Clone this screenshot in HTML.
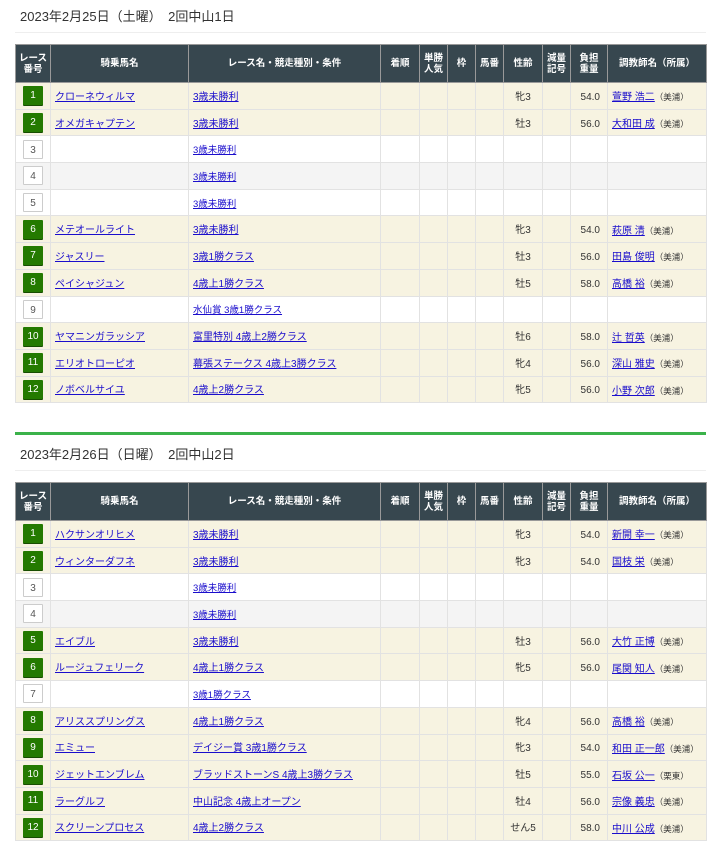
<!DOCTYPE html>
<html><head><meta charset="utf-8"><style>
*{margin:0;padding:0;box-sizing:border-box}
body{width:720px;height:853px;background:#fff;font-family:"Liberation Sans","Noto Sans CJK JP",sans-serif;color:#333;position:relative;overflow:hidden}
.title{position:absolute;left:20px;font-size:13px;color:#333}
.sep{position:absolute;left:15px;width:691px;height:1px;background:#eee}
table{position:absolute;left:15px;width:691px;border-collapse:collapse;table-layout:fixed;font-size:10px}
th{background:#37474f;color:#fff;font-weight:bold;font-size:9.5px;line-height:11px;height:38px;border:1px solid #999;text-align:center;vertical-align:middle}
td{height:26.7px;border:1px solid #e2e2e2;padding:4px 4px 0;white-space:nowrap;vertical-align:middle;line-height:14px}
td:first-child{padding:0}
tr.f td{background:#f7f3e1}
tr.g td{background:#f4f4f4}
tr.w td{background:#fff}
td.c{text-align:center}
td.r{text-align:right;padding-right:7px}
a{color:#1a0dcc;text-decoration:underline}
tr.e a{font-size:9.5px}
.b{display:inline-block;width:20px;height:19px;line-height:19px;text-align:center;font-size:10px;border-radius:1px;vertical-align:middle}
.bg{background:#247a00;color:#fff;box-shadow:0 1px 0 #174d00}
.bw{background:#fff;color:#555;border:1px solid #ccc}
.aff{font-size:8.5px;color:#333}
.green{position:absolute;left:15px;width:691px;height:3px;background:#3bb24a;top:432px}
</style></head><body>
<div class="title" style="top:6px">2023年2月25日（土曜）　2回中山1日</div>
<div class="sep" style="top:32px"></div>
<table style="top:44px">
<colgroup><col style="width:35px"><col style="width:138px"><col style="width:192px"><col style="width:39px"><col style="width:28px"><col style="width:28px"><col style="width:28px"><col style="width:39px"><col style="width:28px"><col style="width:37px"><col style="width:99px"></colgroup>
<tr><th>レース<br>番号</th><th>騎乗馬名</th><th>レース名・競走種別・条件</th><th>着順</th><th>単勝<br>人気</th><th>枠</th><th>馬番</th><th>性齢</th><th>減量<br>記号</th><th>負担<br>重量</th><th>調教師名（所属）</th></tr>
<tr class="f"><td class="c"><span class="b bg">1</span></td><td><a>クローネウィルマ</a></td><td><a>3歳未勝利</a></td><td></td><td></td><td></td><td></td><td class="c">牝3</td><td></td><td class="r">54.0</td><td><a>萱野 浩二</a><span class="aff">（美浦）</span></td></tr>
<tr class="f"><td class="c"><span class="b bg">2</span></td><td><a>オメガキャプテン</a></td><td><a>3歳未勝利</a></td><td></td><td></td><td></td><td></td><td class="c">牡3</td><td></td><td class="r">56.0</td><td><a>大和田 成</a><span class="aff">（美浦）</span></td></tr>
<tr class="w e"><td class="c"><span class="b bw">3</span></td><td></td><td><a>3歳未勝利</a></td><td></td><td></td><td></td><td></td><td></td><td></td><td></td><td></td></tr>
<tr class="g e"><td class="c"><span class="b bw">4</span></td><td></td><td><a>3歳未勝利</a></td><td></td><td></td><td></td><td></td><td></td><td></td><td></td><td></td></tr>
<tr class="w e"><td class="c"><span class="b bw">5</span></td><td></td><td><a>3歳未勝利</a></td><td></td><td></td><td></td><td></td><td></td><td></td><td></td><td></td></tr>
<tr class="f"><td class="c"><span class="b bg">6</span></td><td><a>メテオールライト</a></td><td><a>3歳未勝利</a></td><td></td><td></td><td></td><td></td><td class="c">牝3</td><td></td><td class="r">54.0</td><td><a>萩原 清</a><span class="aff">（美浦）</span></td></tr>
<tr class="f"><td class="c"><span class="b bg">7</span></td><td><a>ジャスリー</a></td><td><a>3歳1勝クラス</a></td><td></td><td></td><td></td><td></td><td class="c">牡3</td><td></td><td class="r">56.0</td><td><a>田島 俊明</a><span class="aff">（美浦）</span></td></tr>
<tr class="f"><td class="c"><span class="b bg">8</span></td><td><a>ペイシャジュン</a></td><td><a>4歳上1勝クラス</a></td><td></td><td></td><td></td><td></td><td class="c">牡5</td><td></td><td class="r">58.0</td><td><a>高橋 裕</a><span class="aff">（美浦）</span></td></tr>
<tr class="w e"><td class="c"><span class="b bw">9</span></td><td></td><td><a>水仙賞 3歳1勝クラス</a></td><td></td><td></td><td></td><td></td><td></td><td></td><td></td><td></td></tr>
<tr class="f"><td class="c"><span class="b bg">10</span></td><td><a>ヤマニンガラッシア</a></td><td><a>富里特別 4歳上2勝クラス</a></td><td></td><td></td><td></td><td></td><td class="c">牡6</td><td></td><td class="r">58.0</td><td><a>辻 哲英</a><span class="aff">（美浦）</span></td></tr>
<tr class="f"><td class="c"><span class="b bg">11</span></td><td><a>エリオトローピオ</a></td><td><a>幕張ステークス 4歳上3勝クラス</a></td><td></td><td></td><td></td><td></td><td class="c">牝4</td><td></td><td class="r">56.0</td><td><a>深山 雅史</a><span class="aff">（美浦）</span></td></tr>
<tr class="f"><td class="c"><span class="b bg">12</span></td><td><a>ノボベルサイユ</a></td><td><a>4歳上2勝クラス</a></td><td></td><td></td><td></td><td></td><td class="c">牝5</td><td></td><td class="r">56.0</td><td><a>小野 次郎</a><span class="aff">（美浦）</span></td></tr>
</table>
<div class="green"></div>
<div class="title" style="top:444px">2023年2月26日（日曜）　2回中山2日</div>
<div class="sep" style="top:470px"></div>
<table style="top:482px">
<colgroup><col style="width:35px"><col style="width:138px"><col style="width:192px"><col style="width:39px"><col style="width:28px"><col style="width:28px"><col style="width:28px"><col style="width:39px"><col style="width:28px"><col style="width:37px"><col style="width:99px"></colgroup>
<tr><th>レース<br>番号</th><th>騎乗馬名</th><th>レース名・競走種別・条件</th><th>着順</th><th>単勝<br>人気</th><th>枠</th><th>馬番</th><th>性齢</th><th>減量<br>記号</th><th>負担<br>重量</th><th>調教師名（所属）</th></tr>
<tr class="f"><td class="c"><span class="b bg">1</span></td><td><a>ハクサンオリヒメ</a></td><td><a>3歳未勝利</a></td><td></td><td></td><td></td><td></td><td class="c">牝3</td><td></td><td class="r">54.0</td><td><a>新開 幸一</a><span class="aff">（美浦）</span></td></tr>
<tr class="f"><td class="c"><span class="b bg">2</span></td><td><a>ウィンターダフネ</a></td><td><a>3歳未勝利</a></td><td></td><td></td><td></td><td></td><td class="c">牝3</td><td></td><td class="r">54.0</td><td><a>国枝 栄</a><span class="aff">（美浦）</span></td></tr>
<tr class="w e"><td class="c"><span class="b bw">3</span></td><td></td><td><a>3歳未勝利</a></td><td></td><td></td><td></td><td></td><td></td><td></td><td></td><td></td></tr>
<tr class="g e"><td class="c"><span class="b bw">4</span></td><td></td><td><a>3歳未勝利</a></td><td></td><td></td><td></td><td></td><td></td><td></td><td></td><td></td></tr>
<tr class="f"><td class="c"><span class="b bg">5</span></td><td><a>エイブル</a></td><td><a>3歳未勝利</a></td><td></td><td></td><td></td><td></td><td class="c">牡3</td><td></td><td class="r">56.0</td><td><a>大竹 正博</a><span class="aff">（美浦）</span></td></tr>
<tr class="f"><td class="c"><span class="b bg">6</span></td><td><a>ルージュフェリーク</a></td><td><a>4歳上1勝クラス</a></td><td></td><td></td><td></td><td></td><td class="c">牝5</td><td></td><td class="r">56.0</td><td><a>尾関 知人</a><span class="aff">（美浦）</span></td></tr>
<tr class="w e"><td class="c"><span class="b bw">7</span></td><td></td><td><a>3歳1勝クラス</a></td><td></td><td></td><td></td><td></td><td></td><td></td><td></td><td></td></tr>
<tr class="f"><td class="c"><span class="b bg">8</span></td><td><a>アリススプリングス</a></td><td><a>4歳上1勝クラス</a></td><td></td><td></td><td></td><td></td><td class="c">牝4</td><td></td><td class="r">56.0</td><td><a>高橋 裕</a><span class="aff">（美浦）</span></td></tr>
<tr class="f"><td class="c"><span class="b bg">9</span></td><td><a>エミュー</a></td><td><a>デイジー賞 3歳1勝クラス</a></td><td></td><td></td><td></td><td></td><td class="c">牝3</td><td></td><td class="r">54.0</td><td><a>和田 正一郎</a><span class="aff">（美浦）</span></td></tr>
<tr class="f"><td class="c"><span class="b bg">10</span></td><td><a>ジェットエンブレム</a></td><td><a>ブラッドストーンS 4歳上3勝クラス</a></td><td></td><td></td><td></td><td></td><td class="c">牡5</td><td></td><td class="r">55.0</td><td><a>石坂 公一</a><span class="aff">（栗東）</span></td></tr>
<tr class="f"><td class="c"><span class="b bg">11</span></td><td><a>ラーグルフ</a></td><td><a>中山記念 4歳上オープン</a></td><td></td><td></td><td></td><td></td><td class="c">牡4</td><td></td><td class="r">56.0</td><td><a>宗像 義忠</a><span class="aff">（美浦）</span></td></tr>
<tr class="f"><td class="c"><span class="b bg">12</span></td><td><a>スクリーンプロセス</a></td><td><a>4歳上2勝クラス</a></td><td></td><td></td><td></td><td></td><td class="c">せん5</td><td></td><td class="r">58.0</td><td><a>中川 公成</a><span class="aff">（美浦）</span></td></tr>
</table>
</body></html>
